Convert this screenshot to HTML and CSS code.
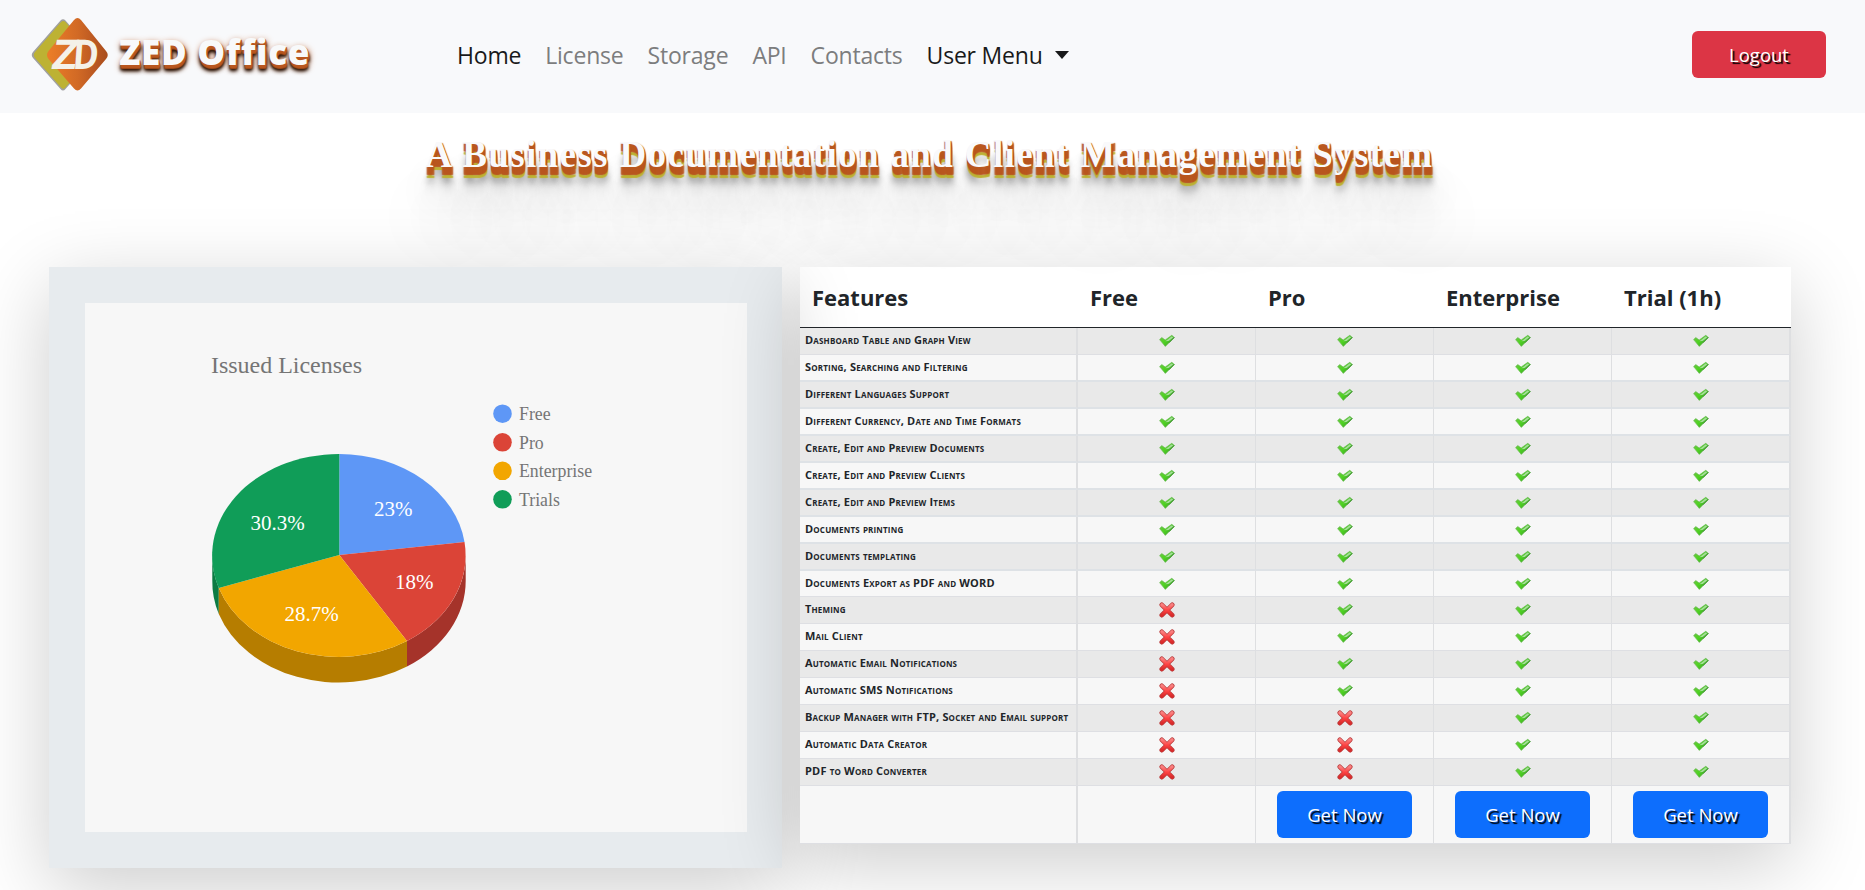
FILE: index.html
```html
<!DOCTYPE html>
<html lang="en">
<head>
<meta charset="utf-8">
<title>ZED Office</title>
<link rel="stylesheet" href="styles.css">
</head>
<body>
<svg class="defs" width="0" height="0" aria-hidden="true">
  <defs>
    <linearGradient id="gGreen" x1="0" y1="0.2" x2="1" y2="0.8"><stop offset="0" stop-color="#6cc644"/><stop offset=".4" stop-color="#4fd321"/><stop offset="1" stop-color="#3a9a2c"/></linearGradient>
    <linearGradient id="gRed" x1="0" y1="0" x2="0" y2="1"><stop offset="0" stop-color="#f98080"/><stop offset=".5" stop-color="#ff4444"/><stop offset="1" stop-color="#d92b2b"/></linearGradient>
    <symbol id="yes" viewBox="0 0 16 16">
      <path d="M.6 6.6 2.8 4.6 6.2 7 12.8 2.3 15.3 4.4 6.3 13.4Z" fill="url(#gGreen)" stroke="#6cba56" stroke-width=".7" stroke-linejoin="round"/>
      <path d="M6.4 8.2 12.8 3.3 14.2 4.4 9.6 8Z" fill="#b5e3ae" opacity=".85"/>
      <path d="M15.3 4.4 10 9.700" stroke="#3c8d30" stroke-width=".9" fill="none"/>
    </symbol>
    <symbol id="no" viewBox="0 0 16 16">
      <path d="M2.8 2.8 13.2 13.2M13.2 2.8 2.8 13.2" stroke="#b93a3a" stroke-width="4.7" stroke-linecap="round"/>
      <path d="M2.9 2.9 13.1 13.1M13.1 2.9 2.9 13.1" stroke="url(#gRed)" stroke-width="3.4" stroke-linecap="round"/>
    </symbol>
  </defs>
</svg>

<header class="navbar">
  <a class="brand">
    <svg class="logo" width="78" height="76" viewBox="0 0 78 76">
      <defs><linearGradient id="gLogo" x1="0" x2="1"><stop offset=".05" stop-color="#ea7c28"/><stop offset=".5" stop-color="#d26a25"/><stop offset=".75" stop-color="#bd5a22"/><stop offset="1" stop-color="#a94d1c"/></linearGradient></defs>
      <path d="M29.5 3.500Q32 .8 34.500 3.500L62 35Q64 38 62 41L34.500 72Q32 75 29.500 72L2 41Q-.5 38 2 35Z" fill="#a0a0a0"/>
      <path d="M30 5Q32.300 3 34.500 5L61 36Q63 38 61 40L34.500 70.500Q32.300 73 30 70.500L4 41Q1.500 38 4 35Z" fill="#bdb233"/>
      <path d="M43 3Q46.500-1 50 3L75 34Q78.500 38 75 42L50 71.500Q46.500 75.500 43 71.500L17.500 42Q14.500 38 17.500 34Z" fill="url(#gLogo)"/>
      <g class="logo-text"><text transform="translate(19.500 52) skewX(-10)" textLength="25" lengthAdjust="spacingAndGlyphs">Z</text><text transform="translate(41 52) skewX(-4)" textLength="26" lengthAdjust="spacingAndGlyphs">D</text></g>
    </svg>
    <span class="brand-name">ZED Office</span>
  </a>
  <nav class="menu">
    <a class="on">Home</a><a>License</a><a>Storage</a><a>API</a><a>Contacts</a><a class="on">User Menu<span class="caret"></span></a>
  </nav>
  <button class="btn danger">Logout</button>
</header>

<h1 class="tagline"><span>A Business Documentation and Client Management System</span></h1>

<main class="content">
  <section class="card">
    <svg class="chart" width="662" height="529" viewBox="85 303 662 529">
      <text class="chart-title" x="211" y="373" textLength="151">Issued Licenses</text>
      <path fill="#0b7b43" d="M212.300 555.500A126.800 101.500 0 0 0 218.800 588V614A126.800 101.500 0 0 1 212.300 580.500Z"/>
      <path fill="#b67d00" d="M218.800 588A126.800 101.500 0 0 0 407 641V666.500A126.800 101.500 0 0 1 218.800 614Z"/>
      <path fill="#a5332a" d="M407 641A126.800 101.500 0 0 0 465.700 555.500V580.500A126.800 101.500 0 0 1 407 666.500Z"/>
      <path fill="#5e97f6" d="M339.300 555V454A126.800 101.500 0 0 1 464.500 542Z"/>
      <path fill="#db4437" d="M339.300 555 464.500 542A126.800 101.500 0 0 1 407 641Z"/>
      <path fill="#f2a600" d="M339.300 555 407 641A126.800 101.500 0 0 1 218.800 588Z"/>
      <path fill="#109d58" d="M339.300 555 218.800 588A126.800 101.500 0 0 1 339.300 454Z"/>
      <g class="slice">
        <text x="374" y="516">23%</text><text x="395" y="589">18%</text><text x="284.500" y="621">28.7%</text><text x="250.500" y="530">30.3%</text>
      </g>
      <circle cx="502.500" cy="413.700" r="9.300" fill="#5e97f6"/><circle cx="502.500" cy="442.300" r="9.300" fill="#db4437"/><circle cx="502.500" cy="470.800" r="9.300" fill="#f2a600"/><circle cx="502.500" cy="499.300" r="9.300" fill="#109d58"/>
      <g class="legend">
        <text x="519" y="420">Free</text><text x="519" y="449">Pro</text><text x="519" y="477">Enterprise</text><text x="519" y="506">Trials</text>
      </g>
    </svg>
  </section>

  <table class="plans">
    <colgroup><col class="c-name"><col class="c-plan"><col class="c-plan"><col class="c-plan"><col class="c-last"></colgroup>
    <thead><tr><th>Features</th><th>Free</th><th>Pro</th><th>Enterprise</th><th>Trial (1h)</th></tr></thead>
    <tbody>
      <tr class="thin"><td>Dashboard Table and Graph View</td><td><svg><use href="#yes"/></svg></td><td><svg><use href="#yes"/></svg></td><td><svg><use href="#yes"/></svg></td><td><svg><use href="#yes"/></svg></td></tr>
      <tr><td>Sorting, Searching and Filtering</td><td><svg><use href="#yes"/></svg></td><td><svg><use href="#yes"/></svg></td><td><svg><use href="#yes"/></svg></td><td><svg><use href="#yes"/></svg></td></tr>
      <tr><td>Different Languages Support</td><td><svg><use href="#yes"/></svg></td><td><svg><use href="#yes"/></svg></td><td><svg><use href="#yes"/></svg></td><td><svg><use href="#yes"/></svg></td></tr>
      <tr><td>Different Currency, Date and Time Formats</td><td><svg><use href="#yes"/></svg></td><td><svg><use href="#yes"/></svg></td><td><svg><use href="#yes"/></svg></td><td><svg><use href="#yes"/></svg></td></tr>
      <tr><td>Create, Edit and Preview Documents</td><td><svg><use href="#yes"/></svg></td><td><svg><use href="#yes"/></svg></td><td><svg><use href="#yes"/></svg></td><td><svg><use href="#yes"/></svg></td></tr>
      <tr><td>Create, Edit and Preview Clients</td><td><svg><use href="#yes"/></svg></td><td><svg><use href="#yes"/></svg></td><td><svg><use href="#yes"/></svg></td><td><svg><use href="#yes"/></svg></td></tr>
      <tr><td>Create, Edit and Preview Items</td><td><svg><use href="#yes"/></svg></td><td><svg><use href="#yes"/></svg></td><td><svg><use href="#yes"/></svg></td><td><svg><use href="#yes"/></svg></td></tr>
      <tr><td>Documents printing</td><td><svg><use href="#yes"/></svg></td><td><svg><use href="#yes"/></svg></td><td><svg><use href="#yes"/></svg></td><td><svg><use href="#yes"/></svg></td></tr>
      <tr><td>Documents templating</td><td><svg><use href="#yes"/></svg></td><td><svg><use href="#yes"/></svg></td><td><svg><use href="#yes"/></svg></td><td><svg><use href="#yes"/></svg></td></tr>
      <tr class="thin short"><td>Documents Export as PDF and WORD</td><td><svg><use href="#yes"/></svg></td><td><svg><use href="#yes"/></svg></td><td><svg><use href="#yes"/></svg></td><td><svg><use href="#yes"/></svg></td></tr>
      <tr class="thin"><td>Theming</td><td><svg><use href="#no"/></svg></td><td><svg><use href="#yes"/></svg></td><td><svg><use href="#yes"/></svg></td><td><svg><use href="#yes"/></svg></td></tr>
      <tr class="thin"><td>Mail Client</td><td><svg><use href="#no"/></svg></td><td><svg><use href="#yes"/></svg></td><td><svg><use href="#yes"/></svg></td><td><svg><use href="#yes"/></svg></td></tr>
      <tr class="thin"><td>Automatic Email Notifications</td><td><svg><use href="#no"/></svg></td><td><svg><use href="#yes"/></svg></td><td><svg><use href="#yes"/></svg></td><td><svg><use href="#yes"/></svg></td></tr>
      <tr class="thin"><td>Automatic SMS Notifications</td><td><svg><use href="#no"/></svg></td><td><svg><use href="#yes"/></svg></td><td><svg><use href="#yes"/></svg></td><td><svg><use href="#yes"/></svg></td></tr>
      <tr class="thin"><td>Backup Manager with FTP, Socket and Email support</td><td><svg><use href="#no"/></svg></td><td><svg><use href="#no"/></svg></td><td><svg><use href="#yes"/></svg></td><td><svg><use href="#yes"/></svg></td></tr>
      <tr class="thin"><td>Automatic Data Creator</td><td><svg><use href="#no"/></svg></td><td><svg><use href="#no"/></svg></td><td><svg><use href="#yes"/></svg></td><td><svg><use href="#yes"/></svg></td></tr>
      <tr class="thin"><td>PDF to Word Converter</td><td><svg><use href="#no"/></svg></td><td><svg><use href="#no"/></svg></td><td><svg><use href="#yes"/></svg></td><td><svg><use href="#yes"/></svg></td></tr>
      <tr class="thin actions"><td></td><td></td><td><button class="btn primary">Get Now</button></td><td><button class="btn primary">Get Now</button></td><td><button class="btn primary">Get Now</button></td></tr>
    </tbody>
  </table>
</main>
</body>
</html>
```
FILE: styles.css
```css
* { box-sizing: border-box; }
html { height: 100%; overflow: hidden; }
body {
  margin: 0;
  height: 890px;
  overflow: hidden;
  background: #fff;
  color: #212529;
  font-family: "Open Sans", "Noto Sans", sans-serif;
}
.defs { position: absolute; }

.navbar {
  display: flex;
  align-items: center;
  height: 113px;
  padding: 0 39px 4px 31px;
  background: #f8f9fb;
}
.brand { display: flex; align-items: center; width: 420px; }
.logo { flex: none; }
.logo-text text { font: 700 41px "Open Sans", sans-serif; fill: #f4f1e8; }
.brand-name {
  margin-left: 10px;
  margin-top: -7px;
  color: #f8f9fa;
  font-size: 35px;
  font-weight: 800;
  letter-spacing: .7px;
  white-space: nowrap;
  text-shadow: 1px 1px 0 #b9571f, 1px 2px 0 #b9571f, 1px 3px 1px #b9571f, 1px 4px 1px #a04a18, 1px 5px 3px #241005, 1px 6px 4px #241005, 1px 3px 7px #b9571f;
}
.menu { display: flex; gap: 24px; margin-left: 6px; font-size: 23px; letter-spacing: -.2px; line-height: 32px; }
.menu a { color: #7c7d7e; white-space: nowrap; }
.menu .on { color: #18191a; }
.caret {
  display: inline-block;
  margin-left: 12px;
  vertical-align: 5px;
  border: 7.500px solid transparent;
  border-top: 8px solid #18191a;
  border-bottom: 0;
}
.btn {
  width: 135px;
  height: 47px;
  padding: 0;
  border: 0;
  border-radius: 6px;
  color: #fff;
  font: 400 18.500px "Open Sans", "Noto Sans", sans-serif;
  text-shadow: 2px 2px 1px #000;
}
.danger { width: 134px; margin-left: auto; background: #dc3545; }
.primary { background: #0d6efd; }

.tagline {
  height: 154px;
  margin: 0;
  padding: 21px 6px 0 0;
  text-align: center;
  font: 700 37px/42px "Liberation Serif", serif;
  letter-spacing: 1.370px;
  color: #f9f9fb;
  white-space: nowrap;
  text-shadow:
    1px 1px 1px #b9571f, 1px 2px 1px #b9571f, 1px 3px 1px #b9571f, 1px 4px 1px #b9571f,
    1px 5px 1px #b9571f, 1px 6px 1px #b9571f, 1px 7px 1px #b9571f, 1px 8px 1px #b9571f,
    1px 10px 1px #bdb233, 1px 11px 1px #bdb233,
    1px 15px 6px rgba(16, 16, 16, .4), 1px 22px 10px rgba(16, 16, 16, .15),
    1px 35px 35px rgba(16, 16, 16, .2), 1px 60px 60px rgba(16, 16, 16, .25);
}

.content { display: flex; align-items: flex-start; gap: 18px; padding-left: 49px; }
.card {
  width: 733px;
  height: 601px;
  padding: 36px 35px 36px 36px;
  background: #e7ebee;
  box-shadow: 0 20px 75px rgba(0, 0, 0, .2);
}
.chart { display: block; background: #f7f7f7; }
.chart text { font-family: "Liberation Serif", serif; }
.chart .chart-title { font-size: 24px; fill: #757575; }
.slice text { font-size: 21px; fill: #fff; }
.legend text { font-size: 17.800px; fill: #757575; }

.plans {
  width: 991px;
  table-layout: fixed;
  border-collapse: separate;
  border-spacing: 0;
  box-shadow: 0 20px 75px rgba(0, 0, 0, .2);
}
.c-name { width: 278px; }
.c-plan { width: 178px; }
.c-last { width: 179px; }
.plans th {
  height: 61px;
  padding: 0 12px;
  border-bottom: 1px solid #212529;
  text-align: left;
  font-size: 22px;
  font-weight: 700;
  line-height: 30px;
  white-space: nowrap;
}
.plans td {
  height: 27px;
  padding: 0;
  border-right: 1px solid #dedfe1;
  border-bottom: 2px solid #dee2e6;
  background: #f7f7f7;
  text-align: center;
  vertical-align: middle;
  line-height: 0;
}
.plans td:first-child {
  padding: 0 0 2px 5px;
  border-right-width: 2px;
  text-align: left;
  font-size: 11px;
  font-weight: 700;
  font-variant: small-caps;
  letter-spacing: .180px;
  line-height: 16px;
  white-space: nowrap;
}
.plans td:last-child { border-right-width: 2px; }
.plans tr:nth-child(odd) td { background: #e9e9e9; }
.plans .thin td { border-bottom: 1px solid #dedfe3; }
.plans .short td { height: 26px; }
.plans .actions td { height: 58px; background: #f7f7f7; }
.plans svg { width: 16px; height: 16px; }
```
